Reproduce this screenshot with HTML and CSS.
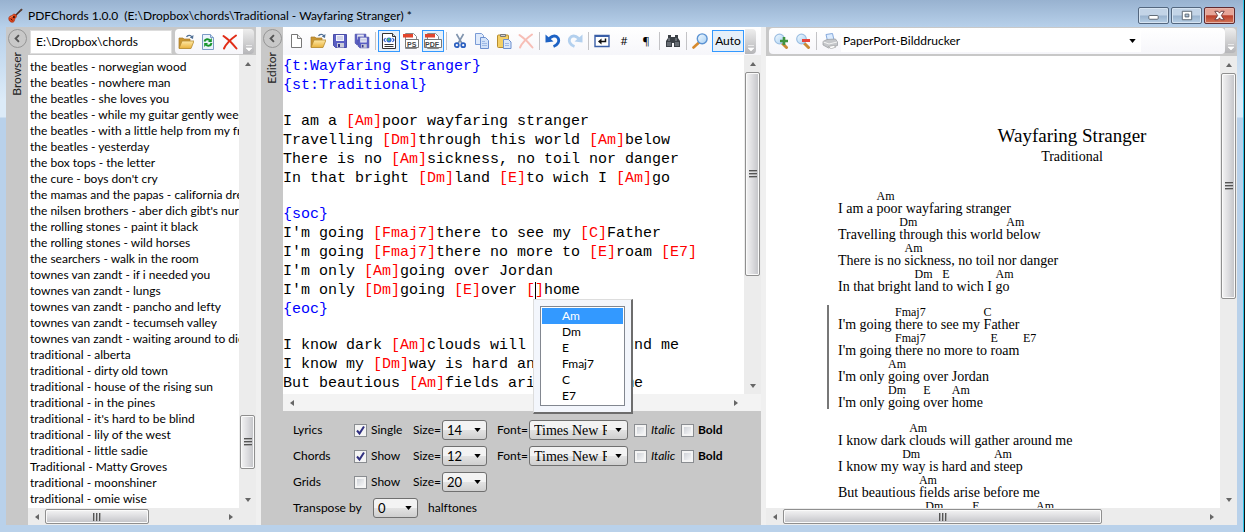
FILE: index.html
```html
<!DOCTYPE html>
<html lang="en">
<head>
<meta charset="utf-8">
<title>PDFChords 1.0.0</title>
<link rel="stylesheet" href="styles.css">
</head>
<body>
<svg class="symbols" aria-hidden="true">
  <defs>
    <linearGradient id="folderFill" x1="0" y1="0" x2="0" y2="1"><stop offset="0" stop-color="#ffe9a6"/><stop offset="1" stop-color="#e9b23c"/></linearGradient>
    <linearGradient id="lens" x1="0" y1="0" x2="1" y2="1"><stop offset="0" stop-color="#f2faff"/><stop offset="1" stop-color="#a9d0f3"/></linearGradient>
  </defs>
  <symbol id="open" viewBox="0 0 16 16">
    <path d="M1 14V4h4l1 1h6v9z" fill="#c99632" stroke="#a8792a" stroke-width=".7"/>
    <path d="M1 14.5 4 7h12l-3 7.5z" fill="url(#folderFill)" stroke="#b58a30" stroke-width=".8"/>
    <path d="M8.500 3c1-2 4-2.500 5.500 0" fill="none" stroke="#4f6f95" stroke-width="1.200"/><path d="m15.500 1-.5 4-3.200-1.600z" fill="#4f6f95"/>
  </symbol>
  <symbol id="cross" viewBox="0 0 16 16">
    <path d="M1.500 2C6 5 11 10 14.500 14.500M14 1.500C9 5 4 10 2 14.500" fill="none" stroke="currentColor" stroke-width="2" stroke-linecap="round"/>
  </symbol>
  <symbol id="floppy" viewBox="0 0 16 16">
    <path d="M1.500 1.500h13v13h-11l-2-2z" fill="#5a5fc4" stroke="#4a4ea8"/><path d="M4 2h8v6H4z" fill="#f3f4fb"/><path d="M5 4h6M5 6h6" stroke="#b2b6d8"/><path d="M5 10h7v4.500H5z" fill="#c9cbd8"/><path d="M6 11h2v3H6z" fill="#34378f"/>
  </symbol>
  <symbol id="lensIcon" viewBox="0 0 16 16">
    <path d="m9 10 4.500 4.500" stroke="#c98a35" stroke-width="3" stroke-linecap="round"/><circle cx="6.500" cy="6" r="4.800" fill="url(#lens)" stroke="#9dbfe2" stroke-width="1.200"/>
  </symbol>
</svg>

<div class="window">
  <header class="titlebar">
    <svg class="app-icon" viewBox="0 0 16 16" aria-hidden="true">
      <path d="m8 8 6-6" stroke="#4a2a20" stroke-width="1.600"/><path d="m12.500 2.500 2-2 1.200 1.300-2 1.800z" fill="#5b4034"/>
      <path d="M1 10c1-2 3-1.200 4-2.700 1-1.500 3.500-.8 4 .7.600 1.500-.9 2.500-1.500 3.300-.7 1.200 0 3-2 3.800C3 16 0 13 1 10z" fill="#d9441c" stroke="#a02a10" stroke-width=".6"/>
      <path d="M2 10.500c1-1.500 2.500-1 3.500-2.200" fill="none" stroke="#ff9a62"/><circle cx="6.300" cy="9.700" r="1.200" fill="#3b1208"/><path d="m3 11.500 1.700 1.700" stroke="#3b1208"/>
    </svg>
    <h1 class="title">PDFChords 1.0.0&nbsp; (E:\Dropbox\chords\Traditional - Wayfaring Stranger) *</h1>
    <div class="window-buttons">
      <button class="winbtn" aria-label="Minimize"><svg viewBox="0 0 30 16"><rect x="10" y="8" width="10" height="4" rx="1" fill="#fff" stroke="#5a6470"/></svg></button>
      <button class="winbtn" aria-label="Maximize"><svg viewBox="0 0 30 16"><path d="M10.500 3.500h10v9h-10zM13.500 6.500v3h4v-3z" fill="#fff" fill-rule="evenodd" stroke="#5a6470"/></svg></button>
      <button class="winbtn close" aria-label="Close"><svg viewBox="0 0 30 16"><path d="m10 3.500 3.500 0 1.500 2 1.500-2 3.500 0-3 4.500 3 4.500h-3.500l-1.500-2-1.500 2H10L13 8z" fill="#fff" stroke="#6a3a3c"/></svg></button>
    </div>
  </header>

  <main class="panes">
    <section class="pane">
      <div class="rail">
        <button class="collapse" aria-label="Collapse browser"><svg viewBox="0 0 18 18"><path d="M10.500 5.500 7 9l3.500 3.500" fill="none" stroke="#555" stroke-width="2"/></svg></button>
        <span class="rail-label">Browser</span>
      </div>
      <div class="content browser">
        <div class="browser-bar">
          <input class="path" type="text" value="E:\Dropbox\chords" aria-label="Folder">
          <div class="toolbar small">
            <button class="tool" aria-label="Open folder"><svg viewBox="0 0 16 16"><use href="#open"/></svg></button>
            <button class="tool" aria-label="Refresh"><svg viewBox="0 0 16 16"><path d="M2.500.5h8l3 3v12h-11z" fill="#eaf3fc" stroke="#7d9cc6"/><path d="M10.500.5v3h3" fill="#c6dbf2" stroke="#7d9cc6"/><path d="M4.500 7.500C5 5 8.500 4.500 10 6.500M11.500 9c-.5 3-4 3.500-5.500 1.500" fill="none" stroke="#16942a" stroke-width="2"/><path d="M11.800 4v4H8zM4.200 13V9H8z" fill="#16942a"/></svg></button>
            <button class="tool red" aria-label="Delete"><svg viewBox="0 0 16 16"><use href="#cross"/></svg></button>
          </div>
          <span class="grip"><svg viewBox="0 0 8 8"><path d="M1 1.500h6M1 4h6L4 7z" fill="#fff" stroke="#fff" stroke-width=".6"/></svg></span>
        </div>
        <div class="scrollbox">
          <ul class="songs">
            <li>the beatles - norwegian wood</li><li>the beatles - nowhere man</li><li>the beatles - she loves you</li><li>the beatles - while my guitar gently weeps</li><li>the beatles - with a little help from my friends</li><li>the beatles - yesterday</li><li>the box tops - the letter</li><li>the cure - boys don't cry</li><li>the mamas and the papas - california dreaming</li><li>the nilsen brothers - aber dich gibt's nur einmal</li><li>the rolling stones - paint it black</li><li>the rolling stones - wild horses</li><li>the searchers - walk in the room</li><li>townes van zandt - if i needed you</li><li>townes van zandt - lungs</li><li>townes van zandt - pancho and lefty</li><li>townes van zandt - tecumseh valley</li><li>townes van zandt - waiting around to die</li><li>traditional - alberta</li><li>traditional - dirty old town</li><li>traditional - house of the rising sun</li><li>traditional - in the pines</li><li>traditional - it's hard to be blind</li><li>traditional - lily of the west</li><li>traditional - little sadie</li><li>Traditional - Matty Groves</li><li>traditional - moonshiner</li><li>traditional - omie wise</li>
          </ul>
          <div class="vbar"><i class="up"></i><div class="track songs-v"><b></b></div><i class="down"></i></div>
          <div class="hbar"><i class="left"></i><div class="track songs-h"><b></b></div><i class="right"></i></div>
          <div class="corner"></div>
        </div>
      </div>
    </section>

    <div class="splitter"></div>

    <section class="pane editor-pane">
      <div class="rail">
        <button class="collapse" aria-label="Collapse editor"><svg viewBox="0 0 18 18"><path d="M10.500 5.500 7 9l3.500 3.500" fill="none" stroke="#555" stroke-width="2"/></svg></button>
        <span class="rail-label">Editor</span>
      </div>
      <div class="content editor">
        <div class="toolbar wide">
          <button class="tool" aria-label="New"><svg viewBox="0 0 16 16"><path d="M3.500 1.500h6l4 4v9h-10z" fill="#fff" stroke="#777"/><path d="M9.500 1.500v4h4" fill="#eee" stroke="#777"/></svg></button>
          <button class="tool" aria-label="Open"><svg viewBox="0 0 16 16"><use href="#open"/></svg></button>
          <button class="tool" aria-label="Save"><svg viewBox="0 0 16 16"><use href="#floppy"/></svg></button>
          <button class="tool" aria-label="Save as"><svg viewBox="0 0 16 16"><use href="#floppy" width="13" height="13"/><use href="#floppy" x="3" y="3" width="13" height="13"/></svg></button>
          <span class="sep"></span>
          <button class="tool on" aria-label="View text"><svg viewBox="0 0 16 16"><path d="M1.500.5h10l3 3v12h-13z" fill="#fff" stroke="#333"/><path d="M11.500.5v3h3" fill="#ddd" stroke="#333"/><path d="M4.500 5 3 7l1.500 2M11.500 5 13 7l-1.500 2" fill="none" stroke="#2454c8" stroke-width="1.200"/><ellipse cx="8" cy="7" rx="2.600" ry="2.400" fill="#2f6ed8"/><circle cx="7.700" cy="6.500" r="1.200" fill="#52c050"/><path d="M3.500 11.500h9M3.500 13.500h9" stroke="#333"/></svg></button>
          <button class="tool" aria-label="PostScript"><svg class="fmt" viewBox="0 0 16 16"><path d="M2.500.5h8l3 3v12h-11z" fill="#fff" stroke="#888"/><path d="M0 1h10v3.500H0z" fill="#e2452c"/><path d="M2.500 6.500h13v8h-13z" fill="#fff" stroke="#777"/><text x="4" y="13.500">PS</text></svg></button>
          <button class="tool on" aria-label="PDF"><svg class="fmt" viewBox="0 0 16 16"><path d="M2.500.5h8l3 3v12h-11z" fill="#fff" stroke="#888"/><path d="M0 1h10v3.500H0z" fill="#e2452c"/><path d="M-.5 6.500h17v8h-17z" fill="#fff" stroke="#777"/><text x="0" y="13.500">PDF</text></svg></button>
          <span class="sep"></span>
          <button class="tool" aria-label="Cut"><svg viewBox="0 0 16 16"><path d="M4.500 1 10 10.500M11.500 1 6 10.500" stroke="#7f93ad" stroke-width="1.600"/><circle cx="4.800" cy="12.200" r="2" fill="none" stroke="#2b5fc0" stroke-width="1.700"/><circle cx="11.200" cy="12.200" r="2" fill="none" stroke="#2b5fc0" stroke-width="1.700"/></svg></button>
          <button class="tool" aria-label="Copy"><svg viewBox="0 0 16 16"><path d="M1.500.5h6l2 2v9h-8z" fill="#dfeafb" stroke="#7a9bd6"/><path d="M6.500 4.500h5l3 3v8h-8z" fill="#d2e2f9" stroke="#6d90cf"/><path d="M8 8.500h3M8 10.500h5M8 12.500h5" stroke="#9db9e6"/></svg></button>
          <button class="tool" aria-label="Paste"><svg viewBox="0 0 16 16"><rect x="1.500" y="2" width="11" height="12.500" rx="1" fill="#f4cf66" stroke="#b78d2f"/><path d="M4.500 3.500v-2h5v2z" fill="#cfcfcf" stroke="#777"/><path d="M7.500 6.500h5l2.500 2.500v6.500H7.500z" fill="#dce8fa" stroke="#6d90cf"/><path d="M9 10.500h4M9 12.500h4" stroke="#9db9e6"/></svg></button>
          <button class="tool faded-red" aria-label="Delete"><svg viewBox="0 0 16 16"><use href="#cross"/></svg></button>
          <span class="sep"></span>
          <button class="tool" aria-label="Undo"><svg viewBox="0 0 16 16"><path d="M3.500 7C6 2.500 11 1.800 13 5c2 3.500-.5 7-4.500 8.500" fill="none" stroke="#1d62c4" stroke-width="2.800"/><path d="M.5 1.500v8l8-1z" fill="#1d62c4"/></svg></button>
          <button class="tool" aria-label="Redo"><svg viewBox="0 0 16 16"><path d="M12.500 7C10 2.500 5 1.800 3 5c-2 3.500.5 7 4.500 8.500" fill="none" stroke="#b3d0ee" stroke-width="2.800"/><path d="M15.500 1.500v8l-8-1z" fill="#b3d0ee"/></svg></button>
          <span class="sep"></span>
          <button class="tool" aria-label="Word wrap"><svg viewBox="0 0 16 16"><path d="M1 2.500h14v11H1z" fill="#fff" stroke="#3a5fa8" stroke-width="1.400"/><path d="M1 3h14" stroke="#3a5fa8" stroke-width="2"/><path d="M11.500 5.500v3H6" fill="none" stroke="#111" stroke-width="1.500"/><path d="M7.500 5.500v6L4 8.500z" fill="#111"/></svg></button>
          <button class="tool mark" aria-label="Line numbers">#</button>
          <button class="tool mark" aria-label="Show marks">¶</button>
          <span class="sep"></span>
          <button class="tool" aria-label="Find"><svg viewBox="0 0 16 16"><path d="M3 2h3v2h4V2h3v3l2 3v6H9v-4H7v4H1V8l2-3z" fill="#3b4046"/><path d="M4 5v3M11 5v3M3 9v4M5 9v4M11 9v4M13 9v4" stroke="#a9b0b8" stroke-width=".8"/></svg></button>
          <span class="sep"></span>
          <button class="tool" aria-label="Zoom"><svg viewBox="0 0 16 16"><path d="M7 9.500 1.500 14.500" stroke="#d78a2e" stroke-width="2.600" stroke-linecap="round"/><circle cx="10.200" cy="5.800" r="4.900" fill="url(#lens)" stroke="#5c93d3" stroke-width="1.400"/></svg></button>
          <button class="tool on auto">Auto</button>
          <span class="grip"><svg viewBox="0 0 8 8"><path d="M1 1.500h6M1 4h6L4 7z" fill="#fff" stroke="#fff" stroke-width=".6"/></svg></span>
        </div>
        <div class="scrollbox">
          <div class="source" contenteditable="true" spellcheck="false" role="textbox" aria-multiline="true" aria-label="Song source">
            <p class="tag">{t:Wayfaring Stranger}</p>
            <p class="tag">{st:Traditional}</p>
            <p class="gap"></p>
            <p>I am a <em>[Am]</em>poor wayfaring stranger</p>
            <p>Travelling <em>[Dm]</em>through this world <em>[Am]</em>below</p>
            <p>There is no <em>[Am]</em>sickness, no toil nor danger</p>
            <p>In that bright <em>[Dm]</em>land <em>[E]</em>to wich I <em>[Am]</em>go</p>
            <p class="gap"></p>
            <p class="tag">{soc}</p>
            <p>I'm going <em>[Fmaj7]</em>there to see my <em>[C]</em>Father</p>
            <p>I'm going <em>[Fmaj7]</em>there no more to <em>[E]</em>roam <em>[E7]</em></p>
            <p>I'm only <em>[Am]</em>going over Jordan</p>
            <p>I'm only <em>[Dm]</em>going <em>[E]</em>over <em>[<span class="caret"></span>]</em>home</p>
            <p class="tag">{eoc}</p>
            <p class="gap"></p>
            <p>I know dark <em>[Am]</em>clouds will gather around me</p>
            <p>I know my <em>[Dm]</em>way is hard and steep</p>
            <p>But beautious <em>[Am]</em>fields arise before me</p>
          </div>
          <div class="vbar"><i class="up"></i><div class="track edit-v"><b></b></div><i class="down"></i></div>
          <div class="hbar pale"><i class="left"></i><div class="track"></div><i class="right"></i></div>
          <div class="corner"></div>
        </div>
        <form class="options">
          <div class="row">
            <span>Lyrics</span>
            <label><input type="checkbox" checked>Single</label>
            <label class="pick">Size=<select><option>14</option></select></label>
            <label class="pick">Font=<select class="font"><option>Times New Roman</option></select></label>
            <label class="it"><input type="checkbox">Italic</label>
            <label class="bd"><input type="checkbox">Bold</label>
          </div>
          <div class="row">
            <span>Chords</span>
            <label><input type="checkbox" checked>Show</label>
            <label class="pick">Size=<select><option>12</option></select></label>
            <label class="pick">Font=<select class="font"><option>Times New Roman</option></select></label>
            <label class="it"><input type="checkbox">Italic</label>
            <label class="bd"><input type="checkbox">Bold</label>
          </div>
          <div class="row">
            <span>Grids</span>
            <label><input type="checkbox">Show</label>
            <label class="pick">Size=<select><option>20</option></select></label>
          </div>
          <div class="transpose">
            <label for="steps">Transpose by</label>
            <select id="steps"><option>0</option></select>
            <span>halftones</span>
          </div>
        </form>
      </div>
      <div class="popup">
        <ul class="chords" role="listbox" aria-label="Chords">
          <li role="option" aria-selected="true">Am</li><li role="option">Dm</li><li role="option">E</li><li role="option">Fmaj7</li><li role="option">C</li><li role="option">E7</li>
        </ul>
      </div>
    </section>

    <div class="splitter"></div>

    <section class="preview">
      <div class="preview-bar">
        <div class="toolbar print">
          <button class="tool" aria-label="Zoom in"><svg viewBox="0 0 16 16"><use href="#lensIcon"/><path d="M11 4v8M7 8h8" stroke="#3f9440" stroke-width="2.600"/></svg></button>
          <button class="tool" aria-label="Zoom out"><svg viewBox="0 0 16 16"><use href="#lensIcon"/><path d="M7 7.500h8" stroke="#e8453c" stroke-width="3"/></svg></button>
          <span class="sep"></span>
          <button class="tool" aria-label="Print"><svg viewBox="0 0 16 16"><path d="M4 1.500 10.500.5 12 7 5.500 8z" fill="#dcecff" stroke="#86a9dc"/><path d="m1 8.500 4-2 8.500-.5 2 3v3.500l-9 2.500L1 12z" fill="#c5c7ca" stroke="#96999d" stroke-width=".7"/><path d="m1.500 9 5.500 2 8-2" fill="none" stroke="#f4f4f4"/><path d="m6.500 13.500 5-1 2.500 1.500-5 1.800z" fill="#fff" stroke="#999" stroke-width=".6"/></svg></button>
          <select class="printer" aria-label="Printer"><option>PaperPort-Bilddrucker</option></select>
        </div>
        <span class="grip"><svg viewBox="0 0 8 8"><path d="M1 1.500h6M1 4h6L4 7z" fill="#fff" stroke="#fff" stroke-width=".6"/></svg></span>
      </div>
      <div class="scrollbox">
        <div class="viewport">
          <article class="sheet">
            <h2>Wayfaring Stranger</h2>
            <h3>Traditional</h3>
            <div class="stanza">
              <p>I am a <b>Am</b>poor wayfaring stranger</p>
              <p>Travelling <b>Dm</b>through this world <b>Am</b>below</p>
              <p>There is no <b>Am</b>sickness, no toil nor danger</p>
              <p>In that bright <b>Dm</b>land <b>E</b>to wich I <b>Am</b>go</p>
            </div>
            <div class="stanza chorus">
              <p>I'm going <b>Fmaj7</b>there to see my <b>C</b>Father</p>
              <p>I'm going <b>Fmaj7</b>there no more to <b>E</b>roam <b>E7</b></p>
              <p>I'm only <b>Am</b>going over Jordan</p>
              <p>I'm only <b>Dm</b>going <b>E</b>over <b>Am</b>home</p>
            </div>
            <div class="stanza">
              <p>I know dark <b>Am</b>clouds will gather around me</p>
              <p>I know my <b>Dm</b>way is hard and <b>Am</b>steep</p>
              <p>But beautious <b>Am</b>fields arise before me</p>
              <p>Where God's re<b>Dm</b>deemed <b>E</b>their vigils <b>Am</b>keep</p>
            </div>
          </article>
        </div>
        <div class="vbar"><i class="up"></i><div class="track view-v"><b></b></div><i class="down"></i></div>
        <div class="hbar"><i class="left"></i><div class="track view-h"><b></b></div><i class="right"></i></div>
        <div class="corner"></div>
      </div>
    </section>
  </main>
</div>
</body>
</html>
```
FILE: styles.css
```css
* { box-sizing: border-box; }
body { margin: 0; background: #111; color: #000; font: 12px/16px Lato, "Open Sans", sans-serif; font-variant-ligatures: none; }
button, input, select { font: inherit; color: inherit; margin: 0; padding: 0; }
ul { list-style: none; margin: 0; padding: 0; }
p, h1, h2, h3 { margin: 0; font-weight: normal; font-size: inherit; }
.symbols { position: absolute; width: 0; height: 0; }

.window {
  display: flex; flex-direction: column; height: 100vh; min-height: 420px; margin-right: 1px;
  padding: 0 6px 7px; border-right: 1px solid #2bc4e6;
  background: linear-gradient(#9ab5d3, #b7d0ea 27px, #dcebf8 100px, #dcebf8 117px, #b9d1ea 118px);
}
.titlebar { display: flex; align-items: center; flex: none; height: 27px; margin: 0 -6px; padding: 4px 8px 0 8px; background: linear-gradient(#98b2d0, #b7d0ea); }
.app-icon { width: 15px; height: 15px; margin-right: 5px; }
.title { flex: 1; white-space: nowrap; overflow: hidden; }
.window-buttons { display: flex; gap: 2px; }
.winbtn { width: 31px; height: 17px; border: 1px solid #54677f; border-radius: 2px; background: linear-gradient(#c3d4e7 48%, #9ab3ce 52%, #b7cfe6); box-shadow: inset 0 0 0 1px #d6e4f2; }
.winbtn svg { display: block; width: 29px; height: 15px; }
.winbtn.close { border-color: #5f2a30; background: linear-gradient(#e6a598 45%, #bb3f2b 52%, #d27558); box-shadow: inset 0 0 0 1px #e5b4a9; }

.panes { flex: 1; min-height: 0; display: grid; grid-template-columns: 250px 5px 500px 5px minmax(0, 1fr); background: #c8c8c8; }
.splitter { background: #f0f0f0; }
.pane { display: flex; min-width: 0; min-height: 0; }
.rail { flex: none; width: 22px; display: flex; flex-direction: column; align-items: center; gap: 4px; padding-top: 2px; background: #c8c8c8; }
.collapse { width: 19px; height: 19px; border: 1px solid #969696; border-radius: 50%; background: #c8c8c8; }
.collapse svg { display: block; width: 17px; height: 17px; }
.rail-label { writing-mode: vertical-rl; transform: rotate(180deg); color: #222; line-height: 16px; }
.content { flex: 1; min-width: 0; min-height: 0; display: flex; flex-direction: column; }

.browser-bar { flex: none; display: flex; height: 28px; padding: 2px 2px 1px; }
.path { flex: 1; min-width: 0; height: 24px; margin-right: 3px; padding: 0 5px; border: 1px solid #ddd; background: #fff; align-self: center; }
.toolbar { display: flex; align-items: center; background: linear-gradient(#fff, #f6f6fa); }
.toolbar.small { width: 68px; border-radius: 4px 0 0 4px; }
.toolbar.wide { flex: none; height: 28px; padding: 0 3px 0 2px; }
.toolbar.print { flex: 1; min-width: 0; padding-left: 1px; border-radius: 4px; }
.tool { flex: none; display: flex; align-items: center; justify-content: center; width: 22px; height: 22px; border: 0; background: none; }
.tool svg { flex: none; width: 16px; height: 16px; }
.tool.on { border: 1px solid #3399ff; background: #e6f0fa; }
.tool.auto { width: 32px; margin-left: 1px; }
.tool.mark { font-family: "Open Sans", sans-serif; font-size: 11px; }
.red { color: #e12c17; }
.faded-red { color: #f7beb6; }
.tool .fmt { font: bold 7px "Liberation Sans", sans-serif; fill: #444; overflow: visible; }
.sep { flex: none; width: 1px; height: 18px; margin: 0 2px; background: #c3c3c6; }
.grip { flex: none; width: 11px; height: 25px; display: flex; align-items: flex-end; justify-content: center; padding-bottom: 2px; background: linear-gradient(#eee, #b5b5b8); border-radius: 0 4px 4px 0; }
.grip svg { width: 8px; height: 8px; }
.wide .grip { margin-left: 1px; }

.scrollbox { flex: 1; min-height: 0; display: grid; grid-template: minmax(0, 1fr) 17px / minmax(0, 1fr) 17px; background: #fff; }
.songs { overflow: hidden; padding: 4px 0 0 2px; white-space: nowrap; }
.songs li { height: 16px; }
.vbar, .hbar { display: flex; background: #ececec; }
.vbar { flex-direction: column; }
.corner { background: #ececec; }
.pale, .pale + .corner { background: #f3f3f3; }
.vbar i, .hbar i { flex: none; width: 17px; height: 17px; display: flex; align-items: center; justify-content: center; }
.vbar i::before, .hbar i::before { content: ""; border: 3px solid transparent; }
.vbar .up::before { border-bottom: 4px solid #666; border-top: 0; }
.vbar .down::before { border-top: 4px solid #666; border-bottom: 0; }
.hbar .left::before { border-right: 4px solid #666; border-left: 0; }
.hbar .right::before { border-left: 4px solid #666; border-right: 0; }
.track { flex: 1; min-width: 0; min-height: 0; display: flex; }
.vbar .track { flex-direction: column; }
.track b { display: flex; align-items: center; justify-content: center; border: 1px solid #8f8f8f; border-radius: 2px; box-shadow: inset 0 0 0 1px #fafafa; }
.vbar b { margin: 0 1px; background: linear-gradient(90deg, #f4f4f4, #dcdcdf 50%, #c2c3c7); }
.hbar b { margin: 1px 0; background: linear-gradient(#f4f4f4, #dcdcdf 50%, #c2c3c7); }
.track b::before { content: ""; width: 8px; height: 8px; }
.vbar b::before { background: repeating-linear-gradient(#555 0 1px, #aaa 1px 2px, transparent 2px 3px); }
.hbar b::before { background: repeating-linear-gradient(90deg, #555 0 1px, #aaa 1px 2px, transparent 2px 3px); }
.songs-v { justify-content: flex-end; }
.songs-v b { height: 13%; margin-bottom: 22px; }
.songs-h b { width: 59%; }
.edit-v b { height: 67%; }
.view-v b { height: 54%; }
.view-h b { width: 76%; }

.source { overflow: hidden; padding-top: 2px; font: 15px/19px "Liberation Mono", monospace; white-space: pre; outline: 0; display: flex; flex-direction: column; }
.source p { flex: none; height: 19px; }
.source .gap { height: 17px; }
.source .tag { color: #0000ff; }
.source em { color: #ff0000; font-style: normal; }
.caret { display: inline-block; width: 1px; height: 17px; margin-right: -1px; background: #000; vertical-align: middle; }

.options { flex: none; padding: 6px 10px 4px; background: #c8c8c8; }
.row { display: grid; grid-template-columns: 61px 59px 84px 137px 47px 1fr; align-items: center; height: 26px; }
.row label { display: flex; align-items: center; white-space: nowrap; }
.options input { appearance: none; width: 13px; height: 13px; margin-right: 4px; border: 1px solid #8a8d91; background: linear-gradient(135deg, #c5c9d0, #fff); box-shadow: inset 0 0 0 2px #f4f4f4; }
.options input:checked { background: url("data:image/svg+xml,%3Csvg xmlns='http://www.w3.org/2000/svg' viewBox='0 0 11 11'%3E%3Cpath d='M2 5.500 4.500 8.500 9 1.500' fill='none' stroke='%23303080' stroke-width='2'/%3E%3C/svg%3E") #f4f4f4; box-shadow: none; }
.options select { appearance: none; width: 45px; height: 20px; padding: 0 20px 0 4px; border: 1px solid #707070; border-radius: 3px; font-size: 13px; background: url("data:image/svg+xml,%3Csvg xmlns='http://www.w3.org/2000/svg' viewBox='0 0 8 5'%3E%3Cpath d='M0 0h8L4 5z'/%3E%3C/svg%3E") right 5px center / 7px 4px no-repeat, linear-gradient(#f3f3f3 48%, #e2e2e2 52%, #cfcfcf); }
.row .pick { display: grid; grid-template-columns: 29px 45px; }
.row .pick:nth-child(4) { grid-template-columns: 32px 99px; }
.options .font { width: 99px; font: 14px "Liberation Serif", serif; }
.it { font-style: italic; }
.bd { font-weight: bold; }
.transpose { display: flex; align-items: center; gap: 10px; height: 26px; }
.transpose label { width: 70px; white-space: nowrap; }

.editor-pane { position: relative; }
.popup { position: absolute; left: 272px; top: 272px; width: 100px; padding: 6px; border: 1px solid #ddd; border-right: 2px solid #6d6d6d; border-bottom: 2px solid #6d6d6d; background: #f3f6fc; }
.chords { padding: 1px; border: 1px solid #828790; background: #fff; }
.chords li { height: 16px; padding-left: 20px; }
.chords [aria-selected="true"] { background: #3399ff; color: #fff; }

.preview { display: flex; flex-direction: column; min-width: 0; min-height: 0; }
.preview-bar { flex: none; display: flex; height: 29px; padding: 1px 1px 2px 3px; background: #c8c8c8; }
.printer { appearance: none; flex: 1; max-width: 300px; height: 22px; padding-left: 2px; border: 0; background: url("data:image/svg+xml,%3Csvg xmlns='http://www.w3.org/2000/svg' viewBox='0 0 8 5'%3E%3Cpath d='M0 0h8L4 5z'/%3E%3C/svg%3E") right 5px center / 7px 4px no-repeat, #fff; }
.viewport { overflow: hidden; }
.sheet { width: 612px; padding: 68px 72px 0; font: 14px/26px "Liberation Serif", serif; white-space: nowrap; }
.sheet h2 { font-size: 19px; line-height: 24px; text-align: center; }
.sheet h3 { line-height: 18px; margin-bottom: 23px; text-align: center; }
.stanza { margin-bottom: 12px; }
.stanza p { height: 26px; padding-top: 7px; line-height: 14px; }
.stanza b { display: inline-block; width: 0; font-weight: normal; font-size: 12px; line-height: 0; vertical-align: 13px; }
.chorus { margin-left: -11px; padding-left: 9px; border-left: 2px solid #777; }
```
